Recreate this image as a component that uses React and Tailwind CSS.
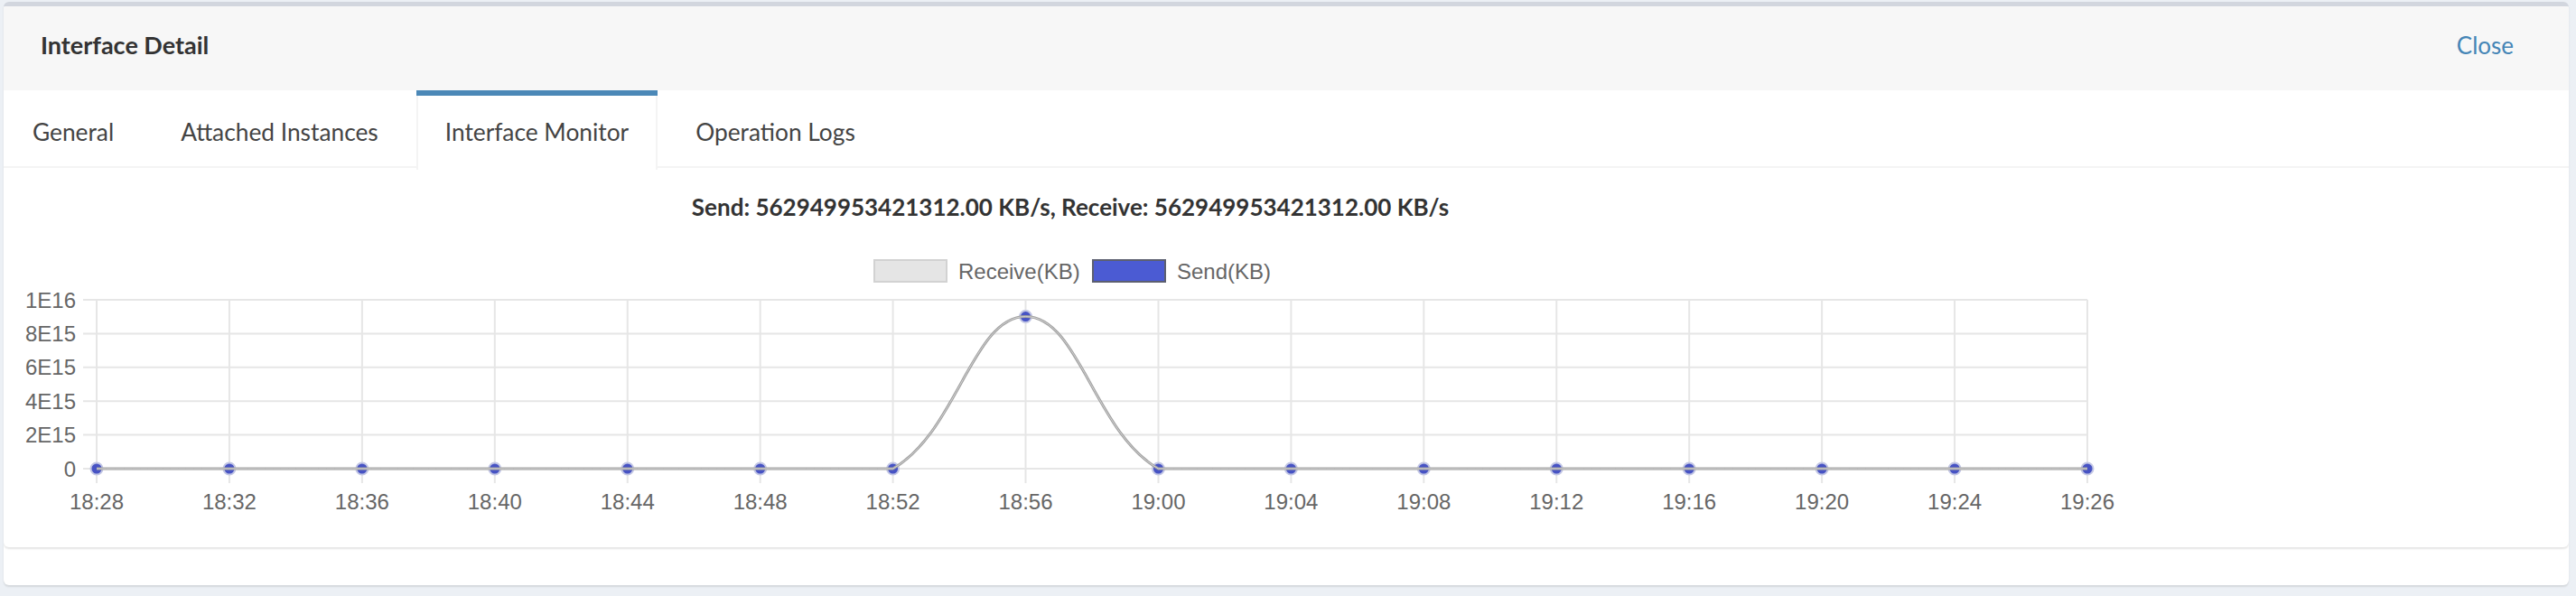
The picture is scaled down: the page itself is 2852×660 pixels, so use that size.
import React from "react";

// Interface detail panel with the monitor tab open
const tabs = ["General", "Attached Instances", "Interface Monitor", "Operation Logs"];
const labels = [
  "18:28", "18:32", "18:36", "18:40", "18:44", "18:48", "18:52", "18:56",
  "19:00", "19:04", "19:08", "19:12", "19:16", "19:20", "19:24", "19:26",
];
const values = labels.map((_, i) => (i === 7 ? 9007199254740992 : 0));

// chart area in svg units
const left = 103;
const right = 2307;
const top = 146;
const bottom = 333;
const maxY = 1e16;
const step = (right - left) / (labels.length - 1);
const yTicks = ["1E16", "8E15", "6E15", "4E15", "2E15", "0"];

const pts = values.map((v, i) => ({ x: left + i * step, y: bottom - (v / maxY) * (bottom - top) }));

// chart.js style spline with capped control points
const curvePath = () => {
  const t = 0.4;
  const clamp = (v, a, b) => Math.min(Math.max(v, a), b);
  const cps = pts.map((cur, i) => {
    const prev = pts[i - 1] || cur;
    const next = pts[i + 1] || cur;
    const d01 = Math.hypot(cur.x - prev.x, cur.y - prev.y);
    const d12 = Math.hypot(next.x - cur.x, next.y - cur.y);
    const sum = d01 + d12 || 1;
    const fa = (t * d01) / sum;
    const fb = (t * d12) / sum;
    return {
      px: clamp(cur.x - fa * (next.x - prev.x), left, right),
      py: clamp(cur.y - fa * (next.y - prev.y), top, bottom),
      nx: clamp(cur.x + fb * (next.x - prev.x), left, right),
      ny: clamp(cur.y + fb * (next.y - prev.y), top, bottom),
    };
  });
  let d = `M ${pts[0].x} ${pts[0].y}`;
  for (let i = 1; i < pts.length; i++) {
    d += ` C ${cps[i - 1].nx} ${cps[i - 1].ny} ${cps[i].px} ${cps[i].py} ${pts[i].x} ${pts[i].y}`;
  }
  return d;
};

const TrafficChart = () => {
  const d = curvePath();
  return (
    <svg width="2362" height="420" viewBox="0 0 2362 420" className="block">
      <text
        x="1181"
        y="43"
        textAnchor="middle"
        dominantBaseline="central"
        fontFamily="Lato, 'Open Sans', sans-serif"
        fontWeight="700"
        fontSize="26"
        fill="#333"
      >
        Send: 562949953421312.00 KB/s, Receive: 562949953421312.00 KB/s
      </text>

      {/* legend */}
      <g fontFamily="'Liberation Sans', Arial, sans-serif" fontSize="24" fill="#666">
        <rect x="964" y="102" width="80" height="24" fill="#e5e5e5" stroke="#d2d2d2" strokeWidth="2" />
        <text x="1057" y="114" dominantBaseline="central">Receive(KB)</text>
        <rect x="1206" y="102" width="80" height="24" fill="#4b5bd3" stroke="#5c5f70" strokeWidth="2" />
        <text x="1299" y="114" dominantBaseline="central">Send(KB)</text>
      </g>

      {/* grid */}
      <g stroke="#e6e6e6" strokeWidth="2">
        {yTicks.map((_, i) => {
          const y = top + (i * (bottom - top)) / 5;
          return <line key={i} x1="88" x2={right} y1={y} y2={y} />;
        })}
        {labels.map((_, i) => (
          <line key={i} x1={left + i * step} x2={left + i * step} y1={top} y2={bottom + 16} />
        ))}
      </g>

      <g fontFamily="'Liberation Sans', Arial, sans-serif" fontSize="24" fill="#666">
        {yTicks.map((l, i) => (
          <text key={l} x="80" y={top + (i * (bottom - top)) / 5} textAnchor="end" dominantBaseline="central">
            {l}
          </text>
        ))}
        {labels.map((l, i) => (
          <text key={l} x={left + i * step} y="369" textAnchor="middle" dominantBaseline="central">
            {l}
          </text>
        ))}
      </g>

      {/* send series points */}
      {pts.map((p, i) => (
        <circle key={i} cx={p.x} cy={p.y} r="6.5" fill="#4753c4" stroke="#c2c6e4" strokeWidth="2" />
      ))}

      {/* lines drawn on top of points */}
      <path d={d} fill="none" stroke="#a2a2a2" strokeWidth="3" />
      <path d={d} fill="none" stroke="#d2d2d2" strokeWidth="1" />
    </svg>
  );
};

const App = () => {
  return (
    <div
      className="h-[660px] bg-[#ecf0f5] pt-[2px] pl-[4px] pr-[8px]"
      style={{ fontFamily: "Lato, 'Open Sans', sans-serif" }}
    >
      <div className="bg-white rounded-[6px] border-t-[5px] border-[#d2d6de] shadow-[0_2px_2px_rgba(0,0,0,0.1)] overflow-hidden">
        {/* header */}
        <div className="h-[93px] bg-[#f7f7f7] flex items-center justify-between pl-[41px] pr-[61px] pb-[6px]">
          <h3 className="text-[27px] font-bold text-[#333]">Interface Detail</h3>
          <button className="text-[26px] text-[#4585b6]">Close</button>
        </div>

        {/* tabs card */}
        <div className="rounded-b-[6px] shadow-[0_2px_2px_rgba(0,0,0,0.1)]">
          <ul className="flex gap-[10px] border-b-2 border-[#f4f4f4] h-[86px]">
            {tabs.map((t) => {
              const active = t === "Interface Monitor";
              return (
                <li
                  key={t}
                  className={
                    active
                      ? "border-t-[6px] border-[#4b88b7] -mb-[2px]"
                      : "border-t-[6px] border-transparent -mb-[2px]"
                  }
                >
                  <a
                    className={
                      active
                        ? "block px-[30px] py-[20px] leading-[40px] text-[26.3px] text-[#444] bg-white border-x-2 border-[#f4f4f4] h-[82px]"
                        : "block px-[30px] py-[20px] leading-[40px] text-[26.3px] text-[#444] border-x-2 border-transparent"
                    }
                  >
                    {t}
                  </a>
                </li>
              );
            })}
          </ul>
          <div className="h-[420px]">
            <TrafficChart />
          </div>
        </div>

        {/* footer */}
        <div className="h-[42px]" />
      </div>
    </div>
  );
};

export default App;
